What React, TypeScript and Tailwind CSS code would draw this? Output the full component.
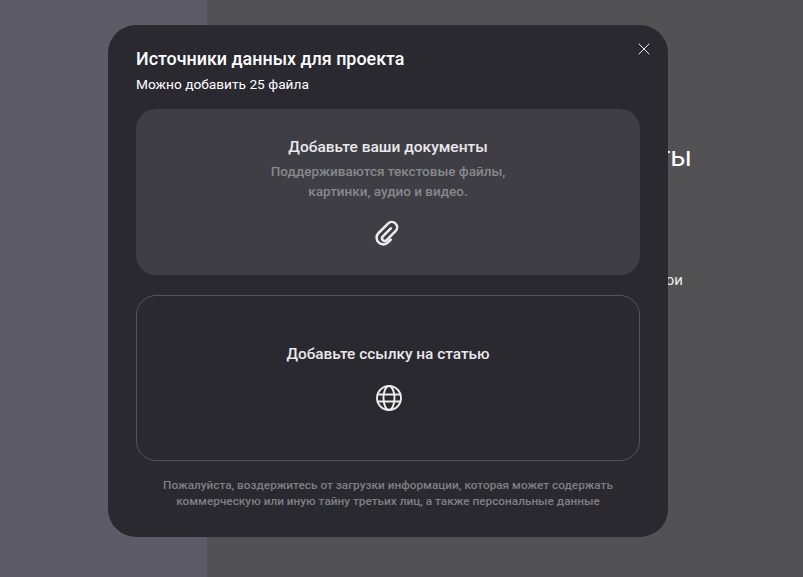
import React from "react";
import { X } from "lucide-react";

const App: React.FC = () => {
  return (
    <div className="relative flex h-[577px] w-[803px] overflow-hidden bg-[#525254] font-['Roboto',sans-serif]">
      <aside className="w-[207px] shrink-0 bg-[#5d5b68]" />

      {/* page behind the dialog, mostly covered */}
      <main className="flex-1 pr-[111px] pt-[141px] text-right text-white">
        <h1 className="text-[28px] leading-8 font-normal">Проекты</h1>
        <p className="mt-[97px] pr-[9px] text-[15px] leading-5 text-[#ececec]">свои</p>
      </main>

      <div className="absolute top-[25px] left-[108px] flex h-[512px] w-[560px] flex-col rounded-[28px] bg-[#2a292f] px-7 pt-[24px]">
        <button className="absolute top-[14px] right-[14px] text-white">
          <X size={20} strokeWidth={1.1} />
        </button>

        <h2 className="text-[17.9px] leading-5 font-medium text-white">Источники данных для проекта</h2>
        <p className="mt-[5px] text-[13.7px] leading-5 text-white">Можно добавить 25 файла</p>

        <div className="mt-[15px] flex h-[166px] flex-col items-center rounded-[20px] bg-[#3f3e44] pt-[28px]">
          <div className="text-[15.5px] leading-5 font-medium text-[#e9e9ea]">Добавьте ваши документы</div>
          <div className="mt-[4px] text-center text-[13.5px] leading-[20px] font-medium text-[#88888b]">
            Поддерживаются текстовые файлы,
            <br />
            картинки, аудио и видео.
          </div>
          <svg viewBox="0 0 24 24" fill="none" stroke="currentColor" strokeWidth="1.9" strokeLinecap="round" className="mt-[16px] h-[32px] w-[32px] text-[#ececec]">
            <path transform="rotate(45 12 12)" d="M17 14v3a5 5 0 0 1-10 0V7a4 4 0 0 1 8 0v9.5a2 2 0 0 1-4 0V8" />
          </svg>
        </div>

        <div className="mt-5 flex h-[166px] flex-col items-center rounded-[20px] border border-[#55545a] pt-[48px]">
          <div className="text-[15.4px] leading-5 font-medium text-[#e9e9ea]">Добавьте ссылку на статью</div>
          <svg viewBox="0 0 28 28" fill="none" stroke="currentColor" strokeWidth="1.9" className="mt-[20px] ml-0.5 h-[28px] w-[28px] text-[#ececec]">
            <circle cx="14" cy="14" r="12" />
            <ellipse cx="14" cy="14" rx="5.5" ry="12" />
            <path d="M3 10.5h22M3 17.5h22" />
          </svg>
        </div>

        <p className="mt-[16px] text-center text-[11.8px] leading-4 font-medium text-[#7f7f83]">
          Пожалуйста, воздержитесь от загрузки информации, которая может содержать
          <br />
          коммерческую или иную тайну третьих лиц, а также персональные данные
        </p>
      </div>
    </div>
  );
};

export default App;
